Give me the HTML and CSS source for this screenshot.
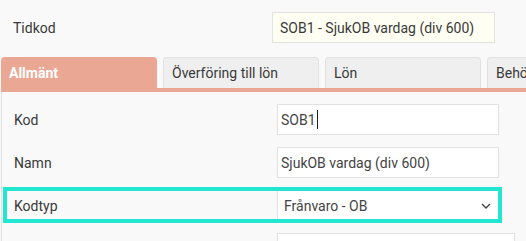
FILE: index.html
```html
<!DOCTYPE html>
<html lang="sv">
<head>
<meta charset="utf-8">
<link rel="stylesheet" href="styles.css">
</head>
<body>
<div class="page">
  <div class="top-row">
    <div class="top-label">Tidkod</div>
    <div class="top-value">SOB1 - SjukOB vardag (div 600)</div>
  </div>
  <div class="tabs">
    <div class="tab active">Allmänt</div>
    <div class="tab">Överföring till lön</div>
    <div class="tab">Lön</div>
    <div class="tab">Behörighet</div>
  </div>
  <div class="panel">
    <div class="row">
      <div class="label">Kod</div>
      <div class="field">SOB1<span class="caret"></span></div>
    </div>
    <div class="row">
      <div class="label">Namn</div>
      <div class="field">SjukOB vardag (div 600)</div>
    </div>
    <div class="row highlighted">
      <div class="label">Kodtyp</div>
      <div class="field select">Frånvaro - OB
        <svg class="chev" width="10" height="6" viewBox="0 0 10 6"><path d="M1 1 L5 5 L9 1" fill="none" stroke="#444" stroke-width="1.4"/></svg>
      </div>
      <div class="hl"></div>
    </div>
    <div class="row">
      <div class="label"></div>
      <div class="field wide"></div>
    </div>
  </div>
</div>
</body>
</html>
```

FILE: styles.css
```css
html, body {
  margin: 0;
  padding: 0;
  background: #f9f9f9;
  font-family: Roboto, "Liberation Sans", sans-serif;
  font-size: 14px;
  color: #3a3a3a;
  overflow: hidden;
}
.page {
  width: 526px;
  height: 241px;
  overflow: hidden;
  padding-left: 1px;
  box-sizing: border-box;
}
.top-row {
  display: flex;
  align-items: center;
  height: 57px;
  padding-left: 12px;
  padding-bottom: 2px;
  box-sizing: border-box;
}
.top-label {
  width: 259px;
}
.top-value {
  width: 223px;
  height: 31px;
  box-sizing: border-box;
  border: 1px solid #e2e2e2;
  background: #fefef2;
  display: flex;
  align-items: center;
  padding-left: 7px;
  white-space: nowrap;
}
.tabs {
  display: flex;
  gap: 6px;
  border-bottom: 4px solid #eaa794;
  white-space: nowrap;
}
.tab {
  flex: 0 0 156px;
  height: 31px;
  box-sizing: border-box;
  border: 1px solid #e2e2e2;
  border-bottom: none;
  border-radius: 4px 4px 0 0;
  background: #efefef;
  display: flex;
  align-items: center;
  padding-left: 8px;
  color: #3a3a3a;
}
.tab.active {
  background: #eaa794;
  border-color: #eaa794;
  color: #fff;
  font-weight: 700;
  padding-left: 7px;
}
.panel {
  border-left: 1px solid #e0e0e0;
  padding: 12px 0 0 12px;
  height: 200px;
}
.row {
  position: relative;
  display: flex;
  align-items: center;
  height: 31px;
  margin-bottom: 12px;
}
.label {
  width: 263px;
  flex: 0 0 263px;
}
.field {
  width: 222px;
  height: 31px;
  box-sizing: border-box;
  border: 1px solid #e2e2e2;
  background: #fff;
  display: flex;
  align-items: center;
  padding-left: 3px;
  color: #444;
  white-space: nowrap;
}
.field.wide {
  width: 238px;
}
.field.select {
  padding-left: 6px;
  justify-content: space-between;
  padding-right: 7px;
}
.caret {
  display: inline-block;
  width: 1px;
  height: 19px;
  background: #222;
  margin-left: 1px;
}
.hl {
  position: absolute;
  left: -11px;
  top: -3px;
  width: 499px;
  height: 36px;
  box-sizing: border-box;
  border: 4px solid #22e6d0;
  pointer-events: none;
}
```
